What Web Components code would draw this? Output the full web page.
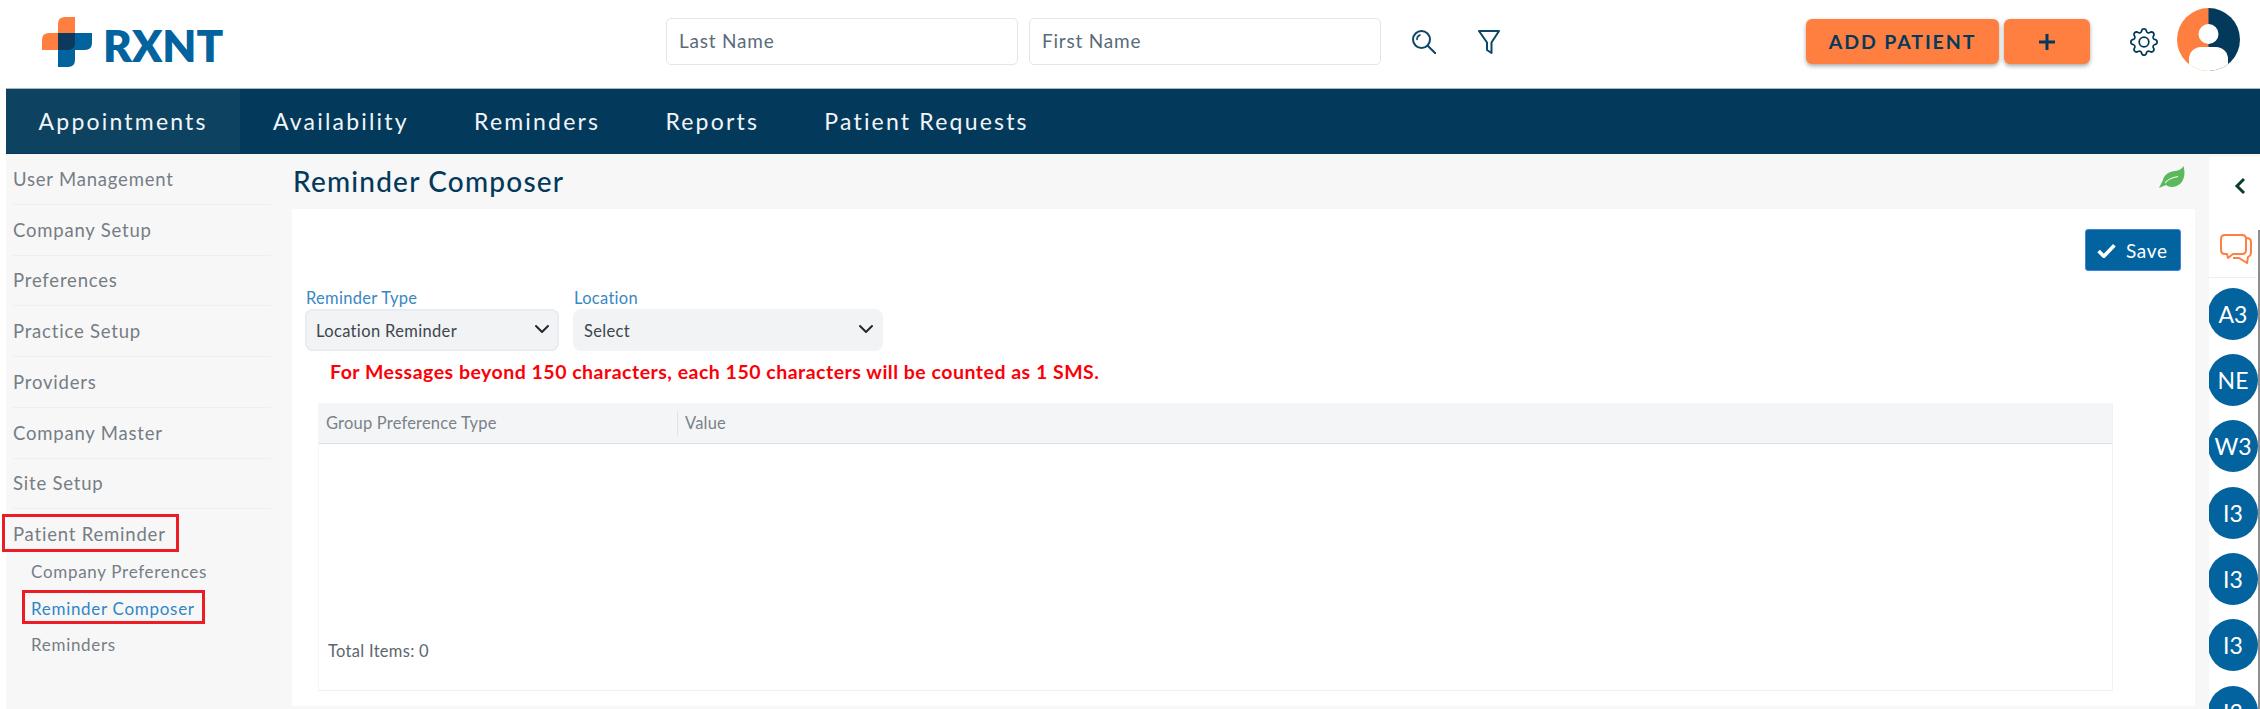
<!DOCTYPE html>
<html>
<head>
<meta charset="utf-8">
<title>Reminder Composer</title>
<style>
    html, body { margin: 0; height: 100%; background: #fff; overflow: hidden; }
    body { font-family: Lato, "Open Sans", sans-serif; }
    rx-app { display: block; }
</style>
</head>
<body>
<rx-app></rx-app>

<script>
const NAVY = '#033a5c';
const BLUE = '#02639f';
const ORANGE = '#ff7f41';

class RxLogo extends HTMLElement {
    constructor() {
        super();
        this.attachShadow({ mode: 'open' });
        this.shadowRoot.innerHTML = `
            <style>
                :host { display: flex; align-items: flex-start; width: 181px; height: 50px; }
                svg { width: 50px; height: 50px; flex: none; }
                span {
                    margin-left: 11px;
                    margin-top: 10px;
                    font: 800 44px/36px Lato, sans-serif;
                    letter-spacing: 0;
                    color: ${BLUE};
                }
            </style>
            <svg viewBox="0 0 50 50">
                <path d="M16 7Q16 0 23 0H33V33H0V23Q0 16 7 16H16Z" fill="${ORANGE}"/>
                <path d="M16 16H50V26Q50 33 43 33H33V43Q33 50 26 50H16Z" fill="${BLUE}"/>
                <path d="M16 16H33V26Q33 33 26 33H16Z" fill="#0d3a5c"/>
            </svg>
            <span>RXNT</span>
        `;
    }
}
customElements.define('rx-logo', RxLogo);

class RxSearchField extends HTMLElement {
    constructor() {
        super();
        this.attachShadow({ mode: 'open' });
        this.shadowRoot.innerHTML = `
            <style>
                :host {
                    display: flex;
                    align-items: center;
                    box-sizing: border-box;
                    width: 352px;
                    height: 47px;
                    padding: 0 0 2px 12px;
                    background: #fff;
                    border: 1px solid #e3e5e8;
                    border-radius: 5px;
                    font-size: 19px;
                    letter-spacing: .8px;
                    color: #5a6b78;
                }
            </style>
            <slot></slot>
        `;
    }
}
customElements.define('rx-search-field', RxSearchField);

class RxButton extends HTMLElement {
    constructor() {
        super();
        this.attachShadow({ mode: 'open' });
        this.shadowRoot.innerHTML = `
            <style>
                :host {
                    display: flex;
                    align-items: center;
                    justify-content: center;
                    box-sizing: border-box;
                    height: 45px;
                    background: ${ORANGE};
                    border-radius: 6px;
                    box-shadow: 0 2px 4px rgba(0,0,0,.35);
                    color: ${NAVY};
                    font-size: 19.5px;
                    font-weight: 700;
                    letter-spacing: 1.9px;
                }
            </style>
            <slot></slot>
        `;
    }
}
customElements.define('rx-button', RxButton);

class RxHeader extends HTMLElement {
    constructor() {
        super();
        this.attachShadow({ mode: 'open' });
        this.shadowRoot.innerHTML = `
            <style>
                :host {
                    display: flex;
                    align-items: center;
                    box-sizing: border-box;
                    height: 88px;
                    padding: 0 0 5px 42px;
                    background: #fff;
                }
                .fields { display: flex; gap: 11px; margin-left: 443px; }
                .search { width: 24px; height: 24px; margin-left: 31px; color: #0d4666; }
                .filter { width: 22px; height: 24px; margin-left: 42px; color: #0d4666; }
                .add { width: 193px; margin-left: 306px; }
                .plus { width: 86px; margin-left: 5px; }
                .gear { width: 28px; height: 28px; margin-left: 40px; color: ${NAVY}; }
                .avatar { width: 63px; height: 63px; margin: 0 0 4px 19px; }
            </style>
            <rx-logo></rx-logo>
            <div class="fields">
                <rx-search-field>Last Name</rx-search-field>
                <rx-search-field>First Name</rx-search-field>
            </div>
            <svg class="search" viewBox="0 0 24 24" fill="none" stroke="currentColor" stroke-width="2" stroke-linecap="round">
                <circle cx="9.5" cy="9.5" r="8.5"/>
                <path d="M16 16l7.5 7.5"/>
                <path d="M5 9.5A4.5 4.5 0 0 1 8 5" stroke-width="1.6"/>
            </svg>
            <svg class="filter" viewBox="0 0 22 24" fill="none" stroke="currentColor" stroke-width="2" stroke-linejoin="round">
                <path d="M1 1H21L13.5 12.5V23L9 20V12.5Z"/>
            </svg>
            <rx-button class="add">ADD PATIENT</rx-button>
            <rx-button class="plus">
                <svg width="18" height="18" viewBox="0 0 18 18"><path d="M7.5 1h3v6.5H17v3h-6.5V17h-3v-6.5H1v-3h6.5z" fill="${NAVY}"/></svg>
            </rx-button>
            <svg class="gear" viewBox="0 0 16 16" fill="currentColor">
                <path d="M8 4.754a3.246 3.246 0 1 0 0 6.492 3.246 3.246 0 0 0 0-6.492zM5.754 8a2.246 2.246 0 1 1 4.492 0 2.246 2.246 0 0 1-4.492 0z"/>
                <path d="M9.796 1.343c-.527-1.79-3.065-1.79-3.592 0l-.094.319a.873.873 0 0 1-1.255.52l-.292-.16c-1.64-.892-3.433.902-2.54 2.541l.159.292a.873.873 0 0 1-.52 1.255l-.319.094c-1.79.527-1.79 3.065 0 3.592l.319.094a.873.873 0 0 1 .52 1.255l-.16.292c-.892 1.64.901 3.434 2.541 2.54l.292-.159a.873.873 0 0 1 1.255.52l.094.319c.527 1.79 3.065 1.79 3.592 0l.094-.319a.873.873 0 0 1 1.255-.52l.292.16c1.64.893 3.434-.902 2.54-2.541l-.159-.292a.873.873 0 0 1 .52-1.255l.319-.094c1.79-.527 1.79-3.065 0-3.592l-.319-.094a.873.873 0 0 1-.52-1.255l.16-.292c.893-1.64-.902-3.433-2.541-2.54l-.292.159a.873.873 0 0 1-1.255-.52l-.094-.319zm-2.633.283c.246-.835 1.428-.835 1.674 0l.094.319a1.873 1.873 0 0 0 2.693 1.115l.291-.16c.764-.415 1.6.42 1.184 1.185l-.159.292a1.873 1.873 0 0 0 1.116 2.692l.318.094c.835.246.835 1.428 0 1.674l-.319.094a1.873 1.873 0 0 0-1.115 2.693l.16.291c.415.764-.42 1.6-1.185 1.184l-.291-.159a1.873 1.873 0 0 0-2.693 1.116l-.094.318c-.246.835-1.428.835-1.674 0l-.094-.319a1.873 1.873 0 0 0-2.692-1.115l-.292.16c-.764.415-1.6-.42-1.184-1.185l.159-.291A1.873 1.873 0 0 0 1.945 8.93l-.319-.094c-.835-.246-.835-1.428 0-1.674l.319-.094A1.873 1.873 0 0 0 3.06 4.377l-.16-.292c-.415-.764.42-1.6 1.185-1.184l.292.159a1.873 1.873 0 0 0 2.692-1.115l.094-.319z"/>
            </svg>
            <svg class="avatar" viewBox="0 0 63 63">
                <defs><clipPath id="round"><circle cx="31.5" cy="31.5" r="31.5"/></clipPath></defs>
                <g clip-path="url(#round)">
                    <rect width="32" height="63" fill="${ORANGE}"/>
                    <rect x="31.5" width="32" height="63" fill="${NAVY}"/>
                    <circle cx="31.5" cy="26" r="10" fill="#fff"/>
                    <rect x="12" y="39" width="39" height="30" rx="12" fill="#fff"/>
                </g>
            </svg>
        `;
    }
}
customElements.define('rx-header', RxHeader);

class RxNav extends HTMLElement {
    constructor() {
        super();
        this.attachShadow({ mode: 'open' });
        const tabs = ['Appointments', 'Availability', 'Reminders', 'Reports', 'Patient Requests'];
        this.shadowRoot.innerHTML = `
            <style>
                :host {
                    display: flex;
                    box-sizing: border-box;
                    height: 66px;
                    margin-left: 6px;
                    background: ${NAVY};
                    border-top: 1px solid #a9b6c1;
                    border-bottom: 1px solid ${NAVY};
                }
                div {
                    display: flex;
                    align-items: center;
                    padding: 0 32.6px;
                    color: #f2f5f7;
                    font-size: 23px;
                    letter-spacing: 2.2px;
                }
                .active { background: #0e4261; }
            </style>
            ${tabs.map((t, i) => `<div class="${i === 0 ? 'active' : ''}">${t}</div>`).join('')}
        `;
    }
}
customElements.define('rx-nav', RxNav);

class RxSideItem extends HTMLElement {
    constructor() {
        super();
        this.attachShadow({ mode: 'open' });
        this.shadowRoot.innerHTML = `
            <style>
                :host {
                    display: flex;
                    align-items: center;
                    position: relative;
                    box-sizing: border-box;
                    height: 50.75px;
                    border-bottom: 1px solid #efefef;
                    color: #767d85;
                    font-size: 18.5px;
                    letter-spacing: .8px;
                }
                :host([last]) { height: 44px; padding-top: 6px; border-bottom: 0; }
                :host([sub]) {
                    height: 36.5px;
                    padding: 0 0 0 18px;
                    border: 0;
                    font-size: 17px;
                    letter-spacing: .7px;
                }
                :host([current]) { color: #2f87c6; }
                /* red annotation boxes sit over the item */
                :host([marked])::after {
                    content: '';
                    position: absolute;
                    left: -11px;
                    top: 5px;
                    width: 177px;
                    height: 38px;
                    box-sizing: border-box;
                    border: 3px solid #ed1c24;
                }
                :host([sub][marked])::after { left: 9px; top: 0; width: 183px; height: 34px; }
            </style>
            <slot></slot>
        `;
    }
}
customElements.define('rx-side-item', RxSideItem);

class RxSidebar extends HTMLElement {
    constructor() {
        super();
        this.attachShadow({ mode: 'open' });
        this.shadowRoot.innerHTML = `
            <style>
                :host {
                    display: block;
                    flex: none;
                    box-sizing: border-box;
                    width: 286px;
                    margin-left: 6px;
                    padding: 0 21px 0 7px;
                    background: #f7f7f7;
                }
            </style>
            <rx-side-item>User Management</rx-side-item>
            <rx-side-item>Company Setup</rx-side-item>
            <rx-side-item>Preferences</rx-side-item>
            <rx-side-item>Practice Setup</rx-side-item>
            <rx-side-item>Providers</rx-side-item>
            <rx-side-item>Company Master</rx-side-item>
            <rx-side-item>Site Setup</rx-side-item>
            <rx-side-item last marked>Patient Reminder</rx-side-item>
            <rx-side-item sub>Company Preferences</rx-side-item>
            <rx-side-item sub current marked>Reminder Composer</rx-side-item>
            <rx-side-item sub>Reminders</rx-side-item>
        `;
    }
}
customElements.define('rx-sidebar', RxSidebar);

class RxSelect extends HTMLElement {
    constructor() {
        super();
        this.attachShadow({ mode: 'open' });
        this.shadowRoot.innerHTML = `
            <style>
                :host { display: block; }
                label { display: block; height: 21px; padding-left: 1px; color: #3a87c4; font-size: 16.5px; letter-spacing: .3px; line-height: 20px; }
                .box {
                    display: flex;
                    align-items: center;
                    justify-content: space-between;
                    box-sizing: border-box;
                    height: 42px;
                    padding: 2px 9px 0 11px;
                    background: #f1f3f5;
                    border-radius: 8px;
                    color: #3e464d;
                    font-size: 16.5px;
                    letter-spacing: .35px;
                }
                :host([focused]) .box { box-shadow: inset 0 0 0 1.5px #e4ebf3; }
                svg { width: 16px; height: 10px; margin-bottom: 4px; }
            </style>
            <label></label>
            <div class="box">
                <slot></slot>
                <svg viewBox="0 0 16 10" fill="none" stroke="#1e2a33" stroke-width="2" stroke-linecap="round" stroke-linejoin="round"><path d="M2 2l6 6 6-6"/></svg>
            </div>
        `;
    }
    connectedCallback() {
        this.shadowRoot.querySelector('label').textContent = this.getAttribute('label');
    }
}
customElements.define('rx-select', RxSelect);

class RxGrid extends HTMLElement {
    constructor() {
        super();
        this.attachShadow({ mode: 'open' });
        this.shadowRoot.innerHTML = `
            <style>
                :host {
                    display: flex;
                    flex-direction: column;
                    box-sizing: border-box;
                    height: 288px;
                    margin: 19px 82px 0 26px;
                    border-bottom: 1px solid #f1f1f1;
                    border-left: 1px solid #f6f6f6;
                    border-right: 1px solid #f1f1f1;
                    color: #7a8289;
                    font-size: 16.5px;
                    letter-spacing: .2px;
                }
                .head {
                    display: flex;
                    align-items: center;
                    box-sizing: border-box;
                    height: 41px;
                    background: #f4f5f7;
                    border-bottom: 1px solid #dcdee0;
                }
                .head div { display: flex; align-items: center; height: 25px; padding-left: 7px; }
                .head div:first-child { width: 351px; border-right: 1px solid #e0e2e4; }
                .body { flex: 1; }
                .foot { height: 24px; padding: 0 0 27px 9px; line-height: 24px; color: #5c6670; letter-spacing: .3px; }
            </style>
            <div class="head"><div>Group Preference Type</div><div>Value</div></div>
            <div class="body"></div>
            <div class="foot">Total Items: 0</div>
        `;
    }
}
customElements.define('rx-grid', RxGrid);

class RxComposer extends HTMLElement {
    constructor() {
        super();
        this.attachShadow({ mode: 'open' });
        this.shadowRoot.innerHTML = `
            <style>
                :host { display: flex; flex-direction: column; flex: 1; min-width: 0; }
                .title {
                    display: flex;
                    align-items: center;
                    justify-content: space-between;
                    box-sizing: border-box;
                    height: 55px;
                    padding: 0 10px 2px 1px;
                    color: ${NAVY};
                    font-size: 28px;
                    font-weight: 500;
                    letter-spacing: 1.2px;
                }
                .title svg { width: 27px; height: 23px; margin-top: -7px; }
                .card {
                    flex: 1;
                    margin-bottom: 3px;
                    padding: 20px 0 15px;
                    background: #fff;
                }
                .actions { display: flex; justify-content: flex-end; padding-right: 14px; }
                .save {
                    display: flex;
                    align-items: center;
                    gap: 10px;
                    box-sizing: border-box;
                    width: 96px;
                    height: 42px;
                    padding-left: 11px;
                    background: ${BLUE};
                    border: 1px solid #3d85e0;
                    border-radius: 3px;
                    color: #fff;
                    font-size: 19px;
                    letter-spacing: .7px;
                }
                .save svg { width: 19px; height: 15px; flex: none; }
                .filters { display: flex; gap: 14px; margin: 17px 0 0 13px; }
                .filters rx-select:first-child { width: 254px; }
                .filters rx-select:last-child { width: 310px; }
                .note {
                    margin: 9px 0 0 38px;
                    color: #fb0007;
                    font-size: 19.5px;
                    font-weight: 700;
                    letter-spacing: .5px;
                    line-height: 24px;
                }
            </style>
            <div class="title">
                <span>Reminder Composer</span>
                <svg viewBox="0 0 27 23">
                    <path d="M1 22C3 18 4 16 5 14 6 8 12 5.500 17 5 21 4.500 24 3 25.500 0 27.500 7 26.500 14 22 18 17 22 11 21.500 8 19 6 20 3 21 1 22Z" fill="#5cb85c"/>
                    <path d="M7 17C10 13 14 11.500 20 10.500" fill="none" stroke="#f7f7f7" stroke-width="1.200"/>
                </svg>
            </div>
            <div class="card">
                <div class="actions">
                    <div class="save">
                        <svg viewBox="0 0 18 14"><path d="M1.500 7.500l5 5L16.500 2" fill="none" stroke="#fff" stroke-width="3.400"/></svg>
                        <span>Save</span>
                    </div>
                </div>
                <div class="filters">
                    <rx-select label="Reminder Type" focused>Location Reminder</rx-select>
                    <rx-select label="Location">Select</rx-select>
                </div>
                <div class="note">For Messages beyond 150 characters, each 150 characters will be counted as 1 SMS.</div>
                <rx-grid></rx-grid>
            </div>
        `;
    }
}
customElements.define('rx-composer', RxComposer);

class RxChip extends HTMLElement {
    constructor() {
        super();
        this.attachShadow({ mode: 'open' });
        this.shadowRoot.innerHTML = `
            <style>
                :host {
                    display: flex;
                    align-items: center;
                    justify-content: center;
                    flex: none;
                    width: 50px;
                    height: 52px;
                    border-radius: 50%;
                    background: ${BLUE};
                    color: #fff;
                    font-size: 23px;
                }
            </style>
            <slot></slot>
        `;
    }
}
customElements.define('rx-chip', RxChip);

class RxRail extends HTMLElement {
    constructor() {
        super();
        this.attachShadow({ mode: 'open' });
        const chips = ['A3', 'NE', 'W3', 'I3', 'I3', 'I3', 'I3'];
        this.shadowRoot.innerHTML = `
            <style>
                :host {
                    display: block;
                    flex: none;
                    position: relative;
                    box-sizing: border-box;
                    width: 51px;
                    margin: 3px 0 0 14px;
                    background: #fff;
                    overflow: hidden;
                }
                .back { display: flex; height: 58px; align-items: center; justify-content: flex-end; padding-right: 14px; }
                .back svg { width: 12px; height: 18px; }
                .chat {
                    display: flex;
                    justify-content: flex-start;
                    height: 63px;
                    box-sizing: border-box;
                    padding: 19px 0 0 11px;
                    margin-right: 3px;
                    border-bottom: 1px solid #efefef;
                }
                .chat svg { width: 33px; height: 31px; }
                .chips { display: flex; flex-direction: column; gap: 14.4px; margin: 9.5px 0 0 -1px; }
                /* scrollbar thumb lies over the rail edge */
                .thumb { position: absolute; right: 0; top: 73px; bottom: 0; width: 2px; background: #8d8d8d; }
            </style>
            <div class="back">
                <svg viewBox="0 0 12 18" fill="none" stroke="#0b3d2e" stroke-width="3"><path d="M10 2L3 9l7 7"/></svg>
            </div>
            <div class="chat">
                <svg viewBox="0 0 33 31" fill="none" stroke="${ORANGE}" stroke-width="2" stroke-linejoin="round">
                    <path d="M5 1H22Q26 1 26 5V16Q26 20 22 20H13L8 24 7 20H5Q1 20 1 16V5Q1 1 5 1Z"/>
                    <path d="M26 4Q31 4 31 8V18Q31 22 28 23L27 29 19 24H13"/>
                </svg>
            </div>
            <div class="chips">${chips.map(c => `<rx-chip>${c}</rx-chip>`).join('')}</div>
            <div class="thumb"></div>
        `;
    }
}
customElements.define('rx-rail', RxRail);

class RxApp extends HTMLElement {
    constructor() {
        super();
        this.attachShadow({ mode: 'open' });
        this.shadowRoot.innerHTML = `
            <style>
                :host { display: block; height: 709px; overflow: hidden; }
                .main { display: flex; height: 555px; background: linear-gradient(90deg, #fff 6px, #f7f7f7 6px); }
            </style>
            <rx-header></rx-header>
            <rx-nav></rx-nav>
            <div class="main">
                <rx-sidebar></rx-sidebar>
                <rx-composer></rx-composer>
                <rx-rail></rx-rail>
            </div>
        `;
    }
}
customElements.define('rx-app', RxApp);
</script>
</body>
</html>
